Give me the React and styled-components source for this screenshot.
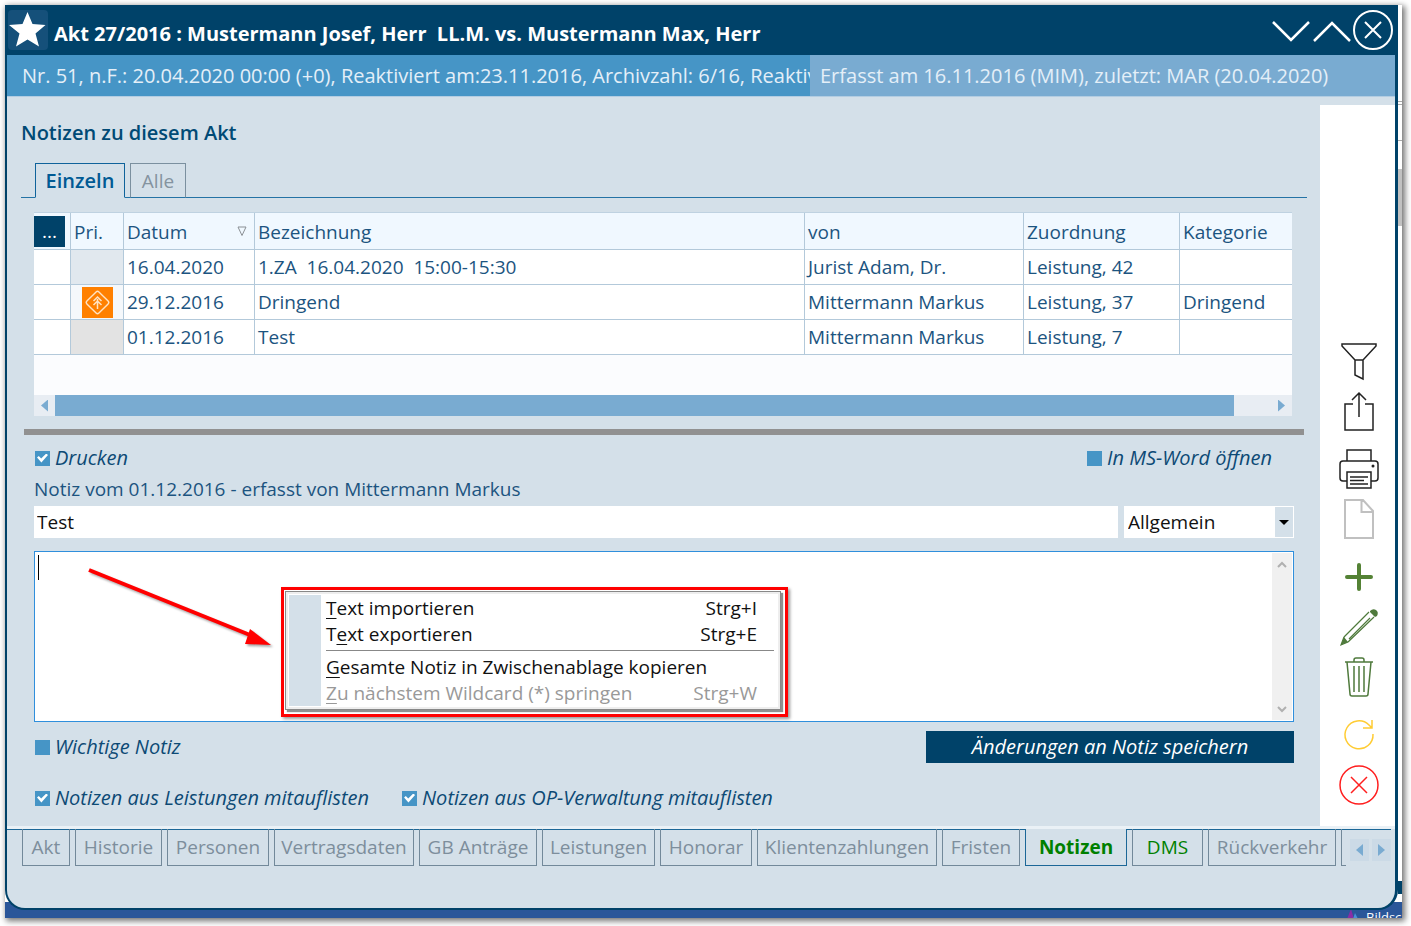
import React, { useState } from 'react';
import styled, { createGlobalStyle } from 'styled-components';

const GlobalStyle = createGlobalStyle`
  * {
    box-sizing: border-box;
  }

  body {
    margin: 0;
    background: #ffffff;
    color: #1c5480;
    font-family: 'Open Sans', 'Noto Sans', sans-serif;
    font-size: 19px;
    line-height: 26px;
  }

  button, input, select, textarea {
    font: inherit;
    color: inherit;
  }

  button {
    padding: 0;
    border: 0;
    background: none;
    cursor: pointer;
  }
`;

const Desktop = styled.div`
  padding: 5px 9px 9px 5px;
`;

const Screen = styled.div`
  overflow: hidden;
  background: #ffffff;
  box-shadow: 2px 2px 6px 1px rgba(0, 0, 0, 0.55);
`;

const ScreenRow = styled.div`
  display: flex;
`;

const Window = styled.div`
  position: relative;
  z-index: 1;
  flex: 1;
  min-width: 0;
  overflow: hidden;
  border: 2px solid #004269;
  border-top: 0;
  border-right-width: 3px;
  border-radius: 0 0 20px 20px;
  background: #d4e0e9;
`;

const Gutter = styled.div`
  display: flex;
  flex-direction: column;
  width: 4px;
`;

const GutterPart = styled.div`
  height: ${(props) => props.$height}px;
  background: ${(props) => props.$color || '#ffffff'};
  border-bottom: ${(props) => (props.$line ? '1px solid #a9a9a9' : '0')};
`;

const Taskbar = styled.div`
  display: flex;
  justify-content: flex-end;
  align-items: flex-start;
  gap: 8px;
  height: 16px;
  margin-top: -8px;
  padding-top: 6px;
  overflow: hidden;
  background: #2a5699;
  color: #ffffff;
  font-size: 13px;
  line-height: 18px;
  white-space: nowrap;
`;

const TaskLabel = styled.span`
  width: 36px;
  overflow: hidden;
`;

const TitleBar = styled.header`
  display: flex;
  align-items: center;
  height: 50px;
  padding: 0 2px 0 1px;
  background: #004269;
  color: #ffffff;
`;

const StarButton = styled.button`
  display: flex;
  width: 40px;
  height: 40px;
  border-radius: 4px;
  background: #15507a;
`;

const Title = styled.h1`
  flex: 1;
  margin: 0 0 0 6px;
  padding-top: 8px;
  font-size: 20px;
  font-weight: 700;
  white-space: pre;
`;

const WindowButton = styled.button`
  display: flex;
  height: 40px;
`;

const InfoBar = styled.div`
  display: grid;
  grid-template-columns: minmax(0, 1fr) 585px;
  height: 42px;
  border-bottom: 1px solid #b3cde2;
  color: #e4eff8;
  font-size: 20px;
  line-height: 42px;
  white-space: nowrap;
`;

const InfoText = styled.div`
  overflow: hidden;
  padding-left: ${(props) => (props.$light ? 10 : 15)}px;
  background: ${(props) => (props.$light ? '#79abd1' : '#4695c6')};
`;

const Columns = styled.div`
  display: grid;
  grid-template-columns: minmax(0, 1fr) 75px;
`;

const Main = styled.main`
  padding: 22px 13px 15px 14px;
`;

const Heading = styled.h2`
  margin: 0 0 16px;
  color: #004a75;
  font-size: 20px;
  font-weight: 600;
  line-height: 28px;
`;

const TabStrip = styled.div`
  display: flex;
  gap: 5px;
  height: 35px;
  padding-left: 14px;
  border-bottom: 1px solid #2473a5;
`;

const Tab = styled.button`
  width: ${(props) => props.$width}px;
  height: 35px;
  border: 1px solid ${(props) => (props.$active ? '#0f639b' : '#7b909f')};
  border-bottom-color: ${(props) => (props.$active ? '#d4e0e9' : '#2473a5')};
  background: #d4e0e9;
  color: ${(props) => (props.$active ? '#005a94' : '#84939f')};
  font-size: ${(props) => (props.$active ? 20 : 19)}px;
  font-weight: ${(props) => (props.$active ? 600 : 400)};
`;

const TablePanel = styled.div`
  margin: 14px 15px 13px 13px;
  border-top: 1px solid #bfd2e1;
  background: #fbfcfe;
`;

const Table = styled.table`
  width: 100%;
  border-collapse: separate;
  border-spacing: 0;
  table-layout: fixed;
`;

const HeadCell = styled.th`
  width: ${(props) => (props.$width ? `${props.$width}px` : 'auto')};
  height: 37px;
  padding: ${(props) => (props.$flush ? '0' : '1px 3px 0')};
  border-bottom: 1px solid #b3c9da;
  border-right: 1px solid #b3c9da;
  background: #f0f8ff;
  font-weight: 400;
  text-align: left;

  &:last-child {
    border-right: 0;
  }
`;

const HeadLabel = styled.div`
  display: flex;
  align-items: center;
  justify-content: space-between;
  padding-right: 4px;
`;

const Cell = styled.td`
  height: 35px;
  padding: 0 3px;
  border-bottom: 1px solid #b3c9da;
  border-right: 1px solid #b3c9da;
  background: ${(props) => props.$background || '#ffffff'};
  overflow: hidden;
  white-space: pre;

  &:last-child {
    border-right: 0;
  }
`;

const PriorityCell = styled(Cell)`
  padding: 0 0 0 11px;

  svg {
    display: block;
  }
`;

const MoreButton = styled.button`
  display: block;
  width: 31px;
  height: 31px;
  background: #004269;
  color: #ffffff;
`;

const TableFiller = styled.div`
  height: 40px;
`;

const ScrollTrack = styled.div`
  display: grid;
  grid-template-columns: 21px minmax(0, 1fr) 58px;
  height: 21px;
  background: #e8edf3;
`;

const ScrollThumb = styled.div`
  background: #79abd1;
`;

const Triangle = styled.span`
  display: block;
  width: 7px;
  height: 12px;
  background: #79abd1;
  clip-path: ${(props) =>
    props.$right
      ? 'polygon(0 0, 100% 50%, 0 100%)'
      : 'polygon(100% 0, 0 50%, 100% 100%)'};
`;

const ScrollButton = styled.button`
  display: flex;
  align-items: center;
  justify-content: ${(props) => (props.$end ? 'flex-end' : 'center')};
  padding-right: ${(props) => (props.$end ? 7 : 0)}px;
`;

const Splitter = styled.div`
  height: 6px;
  margin: 0 3px;
  background: #919191;
`;

const NoteForm = styled.form`
  padding: 10px 13px 0;
`;

const FormRow = styled.div`
  display: flex;
  align-items: center;
  justify-content: ${(props) => (props.$spread ? 'space-between' : 'flex-start')};
  gap: ${(props) => props.$gap || 0}px;
  margin-top: ${(props) => props.$top || 0}px;
  padding-right: ${(props) => props.$right || 0}px;
`;

const CheckLabel = styled.label`
  display: flex;
  align-items: center;
  gap: 5px;
  padding-left: 1px;
  color: #0d4a75;
  font-size: 20px;
  font-style: italic;
`;

const Checkbox = styled.input`
  appearance: none;
  display: flex;
  align-items: center;
  justify-content: center;
  width: 15px;
  height: 15px;
  margin: 0;
  background: #4695c6;

  &:checked::before {
    content: '';
    width: 11px;
    height: 9px;
    background: #ffffff;
    clip-path: polygon(0 45%, 16% 28%, 38% 56%, 84% 0, 100% 18%, 40% 100%);
  }
`;

const NoteInfo = styled.p`
  margin: 5px 0 4px;
`;

const TitleInput = styled.input`
  flex: 1;
  min-width: 0;
  height: 32px;
  padding: 0 3px;
  border: 0;
  background: #ffffff;
  color: #111111;
`;

const SelectBox = styled.div`
  position: relative;
  width: 170px;
  height: 32px;
`;

const Select = styled.select`
  appearance: none;
  width: 100%;
  height: 32px;
  padding: 0 22px 0 4px;
  border: 0;
  border-radius: 0;
  background: #ffffff;
  color: #111111;
`;

const SelectArrow = styled.span`
  position: absolute;
  top: 1px;
  right: 1px;
  display: flex;
  align-items: center;
  justify-content: center;
  width: 18px;
  height: 30px;
  background: #d4e0e9;
  pointer-events: none;

  &::before {
    content: '';
    border: 5px solid transparent;
    border-top-color: #000000;
    border-bottom: 0;
  }
`;

const Editor = styled.div`
  position: relative;
  display: flex;
  height: 171px;
  margin: 13px 0 9px;
  border: 1px solid #2f8fdc;
  background: #ffffff;
`;

const EditorText = styled.textarea`
  flex: 1;
  padding: 4px;
  border: 0;
  outline: 0;
  resize: none;
  background: transparent;
  color: #111111;
`;

const Caret = styled.span`
  position: absolute;
  top: 3px;
  left: 3px;
  width: 1px;
  height: 25px;
  background: #000000;
`;

const EditorScroll = styled.div`
  display: flex;
  flex-direction: column;
  align-items: center;
  justify-content: space-between;
  width: 20px;
  margin: 1px;
  padding: 8px 0 7px;
  background: #f0f0f0;
`;

const ArrowDrawing = styled.svg`
  position: absolute;
  top: 10px;
  left: 50px;
  filter: drop-shadow(2px 2px 1px rgba(0, 0, 0, 0.35));
`;

const MenuFrame = styled.div`
  position: absolute;
  top: 35px;
  left: 246px;
  width: 507px;
  height: 130px;
  padding: 1px 4px 4px 1px;
  border: 3px solid #ff0000;
  background: #ffffff;
  box-shadow: 2px 2px 3px rgba(0, 0, 0, 0.4);
`;

const Menu = styled.div`
  display: grid;
  grid-template-columns: 32px minmax(0, 1fr);
  height: 119px;
  padding: 3px;
  border: 1px solid #888888;
  background: #ffffff;
  color: #111111;
  box-shadow: inset 0 0 0 2px #eeeeee, 2px 2px 1px #8f8f8f;
`;

const MenuMargin = styled.div`
  background: #d4e0e9;
`;

const MenuItems = styled.div`
  padding-left: 5px;
`;

const MenuItem = styled.button`
  display: flex;
  justify-content: space-between;
  width: 100%;
  padding-right: 20px;
  line-height: 26px;

  &:disabled {
    color: #999999;
  }
`;

const MenuLine = styled.div`
  height: 1px;
  margin: 3px 3px 3px 0;
  background: #888888;
`;

const Key = styled.span`
  text-decoration: underline;
  text-decoration-thickness: 1px;
  text-underline-offset: 3px;
`;

const SaveButton = styled.button`
  width: 368px;
  height: 32px;
  background: #004269;
  color: #ffffff;
  font-size: 20px;
  font-style: italic;
`;

const Sidebar = styled.aside`
  display: flex;
  flex-direction: column;
  align-items: center;
  justify-content: flex-end;
  gap: 18px;
  margin-top: 8px;
  padding: 0 0 21px 3px;
  background: #ffffff;
`;

const ToolGroup = styled.div`
  display: flex;
  flex-direction: column;
  gap: 10px;
`;

const ToolButton = styled.button`
  width: 40px;
  height: 40px;
  color: ${(props) => props.$color};

  svg {
    display: block;
    fill: none;
    stroke: currentColor;
    stroke-width: 1.5;
  }
`;

const Footer = styled.nav`
  display: flex;
  align-items: flex-start;
  padding: 0 4px 42px 0;
  border-top: 3px solid #eaf1f6;
`;

const FooterTabs = styled.div`
  display: flex;
  flex: 1;
  min-width: 0;
  gap: 5px;
  height: 37px;
  padding-left: 15px;
  overflow: hidden;
  box-shadow: inset 0 1px 0 #1c6797;
`;

const FooterTab = styled.button`
  flex: none;
  width: ${(props) => props.$width}px;
  height: 37px;
  border: 1px solid ${(props) => (props.$active ? '#1c6797' : '#72899a')};
  border-top: 0;
  background: ${(props) => (props.$active ? '#d4e0e9' : 'transparent')};
  color: ${(props) => (props.$green ? '#008000' : '#7d8e9c')};
  font-weight: ${(props) => (props.$active ? 700 : 400)};
  white-space: nowrap;
`;

const FooterArrows = styled.div`
  display: flex;
  gap: 3px;
  padding: 9px 0 0 4px;
  border-top: 1px solid #1c6797;
`;

const FooterArrow = styled.button`
  display: flex;
  align-items: center;
  justify-content: center;
  width: 19px;
  height: 22px;
  background: #cbdae6;
`;

const notes = [
  {
    date: '16.04.2020',
    label: '1.ZA  16.04.2020  15:00-15:30',
    author: 'Jurist Adam, Dr.',
    relation: 'Leistung, 42',
    category: '',
    background: '#e1e8ee',
  },
  {
    date: '29.12.2016',
    label: 'Dringend',
    author: 'Mittermann Markus',
    relation: 'Leistung, 37',
    category: 'Dringend',
    background: '#f5f8fb',
    urgent: true,
  },
  {
    date: '01.12.2016',
    label: 'Test',
    author: 'Mittermann Markus',
    relation: 'Leistung, 7',
    category: '',
    background: '#e3e3e3',
  },
];

const footerTabs = [
  { label: 'Akt', width: 48 },
  { label: 'Historie', width: 87 },
  { label: 'Personen', width: 102 },
  { label: 'Vertragsdaten', width: 140 },
  { label: 'GB Anträge', width: 118 },
  { label: 'Leistungen', width: 113 },
  { label: 'Honorar', width: 92 },
  { label: 'Klientenzahlungen', width: 180 },
  { label: 'Fristen', width: 78 },
  { label: 'Notizen', width: 102, green: true },
  { label: 'DMS', width: 71, green: true },
  { label: 'Rückverkehr', width: 128 },
  { label: '', width: 60 },
];

const PriorityIcon = () => (
  <svg width="31" height="31" viewBox="0 0 31 31" fill="none" stroke="#ffe3c4">
    <rect width="31" height="31" fill="#ff8000" stroke="none" />
    <rect x="7" y="7" width="17" height="17" rx="2" strokeWidth="1.4" transform="rotate(45 15.5 15.5)" />
    <path d="M15.500 12v10M11.500 14l4-4 4 4M11.500 18l4-4 4 4" strokeWidth="1.5" />
  </svg>
);

const Check = ({ label, defaultChecked }) => (
  <CheckLabel>
    <Checkbox type="checkbox" defaultChecked={defaultChecked} />
    {label}
  </CheckLabel>
);

const Tool = ({ label, color = '#222222', children }) => (
  <ToolButton type="button" aria-label={label} $color={color}>
    <svg width="40" height="40" viewBox="0 0 40 40">
      {children}
    </svg>
  </ToolButton>
);

const ContextMenu = () => (
  <MenuFrame>
    <Menu>
      <MenuMargin />
      <MenuItems>
        <MenuItem type="button">
          <span><Key>T</Key>ext importieren</span>
          <span>Strg+I</span>
        </MenuItem>
        <MenuItem type="button">
          <span>T<Key>e</Key>xt exportieren</span>
          <span>Strg+E</span>
        </MenuItem>
        <MenuLine />
        <MenuItem type="button">
          <span><Key>G</Key>esamte Notiz in Zwischenablage kopieren</span>
        </MenuItem>
        <MenuItem type="button" disabled>
          <span><Key>Z</Key>u nächstem Wildcard (*) springen</span>
          <span>Strg+W</span>
        </MenuItem>
      </MenuItems>
    </Menu>
  </MenuFrame>
);

const NotesTable = () => (
  <TablePanel>
    <Table>
      <thead>
        <tr>
          <HeadCell $width={37} $flush>
            <MoreButton type="button">...</MoreButton>
          </HeadCell>
          <HeadCell $width={53}>Pri.</HeadCell>
          <HeadCell $width={131}>
            <HeadLabel>
              Datum
              <svg width="10" height="11" viewBox="0 0 10 11" fill="none" stroke="#8a8f94">
                <path d="M1 1h8L5 9.500z" />
              </svg>
            </HeadLabel>
          </HeadCell>
          <HeadCell>Bezeichnung</HeadCell>
          <HeadCell $width={219}>von</HeadCell>
          <HeadCell $width={156}>Zuordnung</HeadCell>
          <HeadCell $width={112}>Kategorie</HeadCell>
        </tr>
      </thead>
      <tbody>
        {notes.map((note) => (
          <tr key={note.date}>
            <Cell />
            <PriorityCell $background={note.background}>
              {note.urgent && <PriorityIcon />}
            </PriorityCell>
            <Cell>{note.date}</Cell>
            <Cell>{note.label}</Cell>
            <Cell>{note.author}</Cell>
            <Cell>{note.relation}</Cell>
            <Cell>{note.category}</Cell>
          </tr>
        ))}
      </tbody>
    </Table>
    <TableFiller />
    <ScrollTrack>
      <ScrollButton type="button" aria-label="Nach links">
        <Triangle />
      </ScrollButton>
      <ScrollThumb />
      <ScrollButton type="button" aria-label="Nach rechts" $end>
        <Triangle $right />
      </ScrollButton>
    </ScrollTrack>
  </TablePanel>
);

const Tools = () => (
  <Sidebar>
    <ToolGroup>
      <Tool label="Filtern">
        <path d="M3 3h34v2L24 19v19l-8-4V19L3 5zM16 19h8" />
      </Tool>
      <Tool label="Exportieren">
        <path d="M14 13H6v26h28V13h-8M20 26V2M13 9l7-7 7 7" />
      </Tool>
    </ToolGroup>
    <ToolGroup>
      <Tool label="Drucken">
        <path d="M8 12V1h24v11M8 32H4q-3 0-3-3V15q0-3 3-3h32q3 0 3 3v14q0 3-3 3h-4" />
        <path d="M8 23h24v16H8zM11 28h18M11 31.500h14M11 35h18" />
        <circle cx="34" cy="17" r="1.500" fill="currentColor" stroke="none" />
      </Tool>
      <Tool label="Neues Dokument" color="#c0c0c0">
        <path d="M6 1h18l10 11v27H6zM22.500 1v12H34" strokeWidth="2" />
      </Tool>
    </ToolGroup>
    <ToolGroup>
      <Tool label="Hinzufügen" color="#548235">
        <path d="M20 8v24M8 20h24" strokeWidth="4" strokeLinecap="round" />
      </Tool>
      <Tool label="Bearbeiten" color="#4f7a3c">
        <path d="M5 30L30 5M9 35L35 10M10 32L31 11M5 30l-3 8 7-3" strokeWidth="1.2" />
        <path d="M2 38l3-8 4 5zM31 4q3-3 6-1t1 6l-2 1-5-5z" fill="currentColor" stroke="none" />
      </Tool>
      <Tool label="Löschen" color="#4f7a3c">
        <path d="M6 5h28M8 5l3 32q0 2 2 2h14q2 0 2-2l3-32M15 5V3q0-2 2-2h6q2 0 2 2v2M15 9v26M20 9v26M25 9v26" />
      </Tool>
    </ToolGroup>
    <ToolGroup>
      <Tool label="Aktualisieren" color="#ffcc33">
        <path d="M34 19A14 14 0 1 1 30 10l3 3M24 13h9V5" />
      </Tool>
      <Tool label="Schließen" color="#ff1f1f">
        <circle cx="20" cy="20" r="19" />
        <path d="M12 12l16 16M28 12L12 28" />
      </Tool>
    </ToolGroup>
  </Sidebar>
);

const App = () => {
  const [view, setView] = useState('Einzeln');
  const [page, setPage] = useState('Notizen');

  return (
    <>
      <GlobalStyle />
      <Desktop>
        <Screen>
          <ScreenRow>
            <Window>
              <TitleBar>
                <StarButton type="button" aria-label="Favorit">
                  <svg width="40" height="40" viewBox="0 0 40 40" fill="#ffffff">
                    <path d="M19.500 2l5 12 13 1-10 8.500 3.500 13-11.500-7-11.500 7 3.500-13L1 15l13.500-1z" />
                  </svg>
                </StarButton>
                <Title>Akt 27/2016 : Mustermann Josef, Herr  LL.M. vs. Mustermann Max, Herr</Title>
                <WindowButton type="button" aria-label="Nach unten">
                  <svg width="41" height="40" viewBox="0 0 41 40" fill="none" stroke="#ffffff" strokeWidth="2.500">
                    <path d="M2 12l18 18 18-18" />
                  </svg>
                </WindowButton>
                <WindowButton type="button" aria-label="Nach oben">
                  <svg width="41" height="40" viewBox="0 0 41 40" fill="none" stroke="#ffffff" strokeWidth="2.500">
                    <path d="M2 31l18-18 18 18" />
                  </svg>
                </WindowButton>
                <WindowButton type="button" aria-label="Fenster schließen">
                  <svg width="40" height="40" viewBox="0 0 40 40" fill="none" stroke="#ffffff" strokeWidth="2">
                    <circle cx="20" cy="20" r="19" />
                    <path d="M12 12l16 16M28 12L12 28" />
                  </svg>
                </WindowButton>
              </TitleBar>

              <InfoBar>
                <InfoText>
                  Nr. 51, n.F.: 20.04.2020 00:00 (+0), Reaktiviert am:23.11.2016, Archivzahl: 6/16, Reaktiv
                </InfoText>
                <InfoText $light>Erfasst am 16.11.2016 (MIM), zuletzt: MAR (20.04.2020)</InfoText>
              </InfoBar>

              <Columns>
                <Main>
                  <Heading>Notizen zu diesem Akt</Heading>
                  <TabStrip>
                    <Tab type="button" $width={90} $active={view === 'Einzeln'} onClick={() => setView('Einzeln')}>
                      Einzeln
                    </Tab>
                    <Tab type="button" $width={56} $active={view === 'Alle'} onClick={() => setView('Alle')}>
                      Alle
                    </Tab>
                  </TabStrip>

                  <NotesTable />
                  <Splitter />

                  <NoteForm onSubmit={(e) => e.preventDefault()}>
                    <FormRow $spread $right={22}>
                      <Check label="Drucken" defaultChecked />
                      <Check label="In MS-Word öffnen" />
                    </FormRow>
                    <NoteInfo>Notiz vom 01.12.2016 - erfasst von Mittermann Markus</NoteInfo>
                    <FormRow $gap={6}>
                      <TitleInput type="text" aria-label="Bezeichnung" defaultValue="Test" />
                      <SelectBox>
                        <Select aria-label="Kategorie" defaultValue="Allgemein">
                          <option>Allgemein</option>
                          <option>Dringend</option>
                        </Select>
                        <SelectArrow />
                      </SelectBox>
                    </FormRow>
                    <Editor>
                      <EditorText aria-label="Notiztext" />
                      <EditorScroll>
                        <svg width="10" height="8" viewBox="0 0 10 8" fill="none" stroke="#b0b0b0" strokeWidth="2">
                          <path d="M1 6l4-4 4 4" />
                        </svg>
                        <svg width="10" height="8" viewBox="0 0 10 8" fill="none" stroke="#b0b0b0" strokeWidth="2">
                          <path d="M1 2l4 4 4-4" />
                        </svg>
                      </EditorScroll>
                      <Caret />
                      <ArrowDrawing width="190" height="90" viewBox="0 0 190 90">
                        <path d="M4 8L165 73" stroke="#ff0000" strokeWidth="4" />
                        <path d="M165 67L186 83l-26-1z" fill="#ff0000" />
                      </ArrowDrawing>
                      <ContextMenu />
                    </Editor>
                    <FormRow $spread>
                      <Check label="Wichtige Notiz" />
                      <SaveButton type="submit">Änderungen an Notiz speichern</SaveButton>
                    </FormRow>
                    <FormRow $gap={32} $top={22}>
                      <Check label="Notizen aus Leistungen mitauflisten" defaultChecked />
                      <Check label="Notizen aus OP-Verwaltung mitauflisten" defaultChecked />
                    </FormRow>
                  </NoteForm>
                </Main>
                <Tools />
              </Columns>

              <Footer>
                <FooterTabs>
                  {footerTabs.map((tab) => (
                    <FooterTab
                      key={tab.label}
                      type="button"
                      $width={tab.width}
                      $green={tab.green}
                      $active={page === tab.label}
                      onClick={() => setPage(tab.label)}
                    >
                      {tab.label}
                    </FooterTab>
                  ))}
                </FooterTabs>
                <FooterArrows>
                  <FooterArrow type="button" aria-label="Vorherige Reiter">
                    <Triangle />
                  </FooterArrow>
                  <FooterArrow type="button" aria-label="Weitere Reiter">
                    <Triangle $right />
                  </FooterArrow>
                </FooterArrows>
              </Footer>
            </Window>
            <Gutter>
              <GutterPart $height={97} $line />
              <GutterPart $height={3} $line />
              <GutterPart $height={36} $line />
              <GutterPart $height={28} />
              <GutterPart $height={57} $color="#c1c1c1" />
              <GutterPart $height={655} />
              <GutterPart $height={13} $color="#004269" />
            </Gutter>
          </ScreenRow>
          <Taskbar>
            <svg width="12" height="12" viewBox="0 0 12 12">
              <path d="M1 11L5 1l3 10z" fill="#8a2da5" />
              <path d="M7 11l2-6 3 6z" fill="#4a8fd8" />
            </svg>
            <TaskLabel>Bildsc</TaskLabel>
          </Taskbar>
        </Screen>
      </Desktop>
    </>
  );
};

export default App;
